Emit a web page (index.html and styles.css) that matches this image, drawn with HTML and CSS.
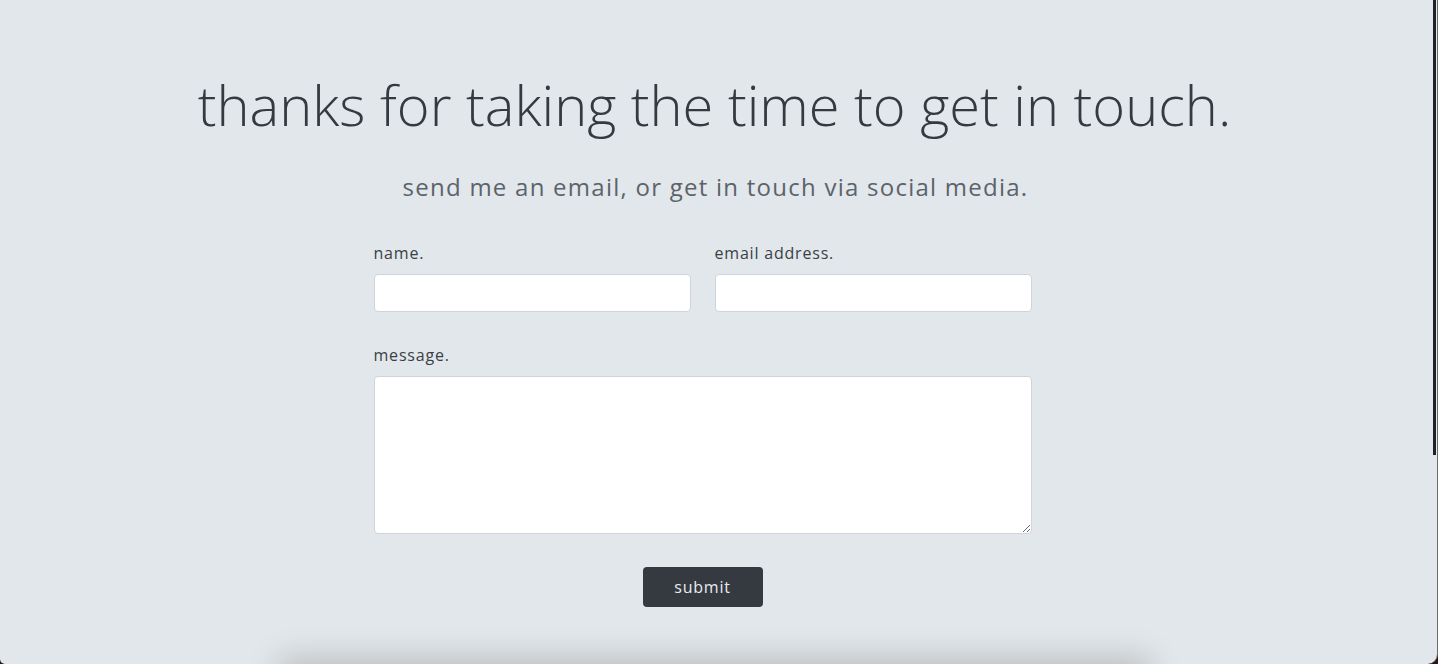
FILE: index.html
```html
<!DOCTYPE html>
<html lang="en">
<head>
<meta charset="utf-8">
<title>contact</title>
<link rel="stylesheet" href="styles.css">
</head>
<body>
<div class="window">
  <main class="page">
    <h1 class="title">thanks for taking the time to get in touch.</h1>
    <p class="lead">send me an email, or get in touch via social media.</p>
    <form class="contact">
      <div class="row">
        <div class="field">
          <label class="label" for="name">name.</label>
          <input class="control" id="name" type="text">
        </div>
        <div class="field">
          <label class="label" for="email">email address.</label>
          <input class="control" id="email" type="email">
        </div>
      </div>
      <div class="field message">
        <label class="label" for="msg">message.</label>
        <textarea class="control area" id="msg"></textarea>
      </div>
      <div class="actions">
        <button class="submit" type="button">submit</button>
      </div>
    </form>
    <div class="next-card"></div>
  </main>
  <div class="scroll-thumb"></div>
</div>
</body>
</html>
```

FILE: styles.css
```css
* { box-sizing: border-box; }
html, body { margin: 0; padding: 0; }
body {
  background: #2a1414;
  font-family: "Open Sans", "Noto Sans", sans-serif;
  color: #343a40;
}
.window {
  position: relative;
  width: 1438px;
  height: 664px;
  background: #e2e7eb;
  border-right: 1px solid #6a6a6a;
  border-radius: 0 0 10px 5px;
  overflow: hidden;
}
.page {
  display: flex;
  flex-direction: column;
  align-items: center;
  padding-top: 71px;
}
.title {
  margin: 0 0 0 -8px;
  font-size: 56px;
  font-weight: 300;
  line-height: 67px;
  color: #343a40;
}
.lead {
  margin: 34px 0 0 -6px;
  font-size: 24px;
  line-height: 29px;
  letter-spacing: 1.25px;
  color: #5c636a;
}
.contact {
  width: 658px;
  margin: 40px 32px 0 0;
}
.row {
  display: flex;
  gap: 24px;
}
.row .field { flex: 1; }
.label {
  display: block;
  font-size: 16px;
  line-height: 24px;
  letter-spacing: 0.8px;
  margin-bottom: 9px;
  color: #3a3f44;
}
.control {
  display: block;
  width: 100%;
  height: 38px;
  background: #fff;
  border: 1px solid #ced4da;
  border-radius: 4px;
  font: inherit;
}
.message { margin-top: 31px; }
.area {
  height: 158px;
  resize: vertical;
}
.actions {
  display: flex;
  justify-content: center;
  margin-top: 33px;
}
.submit {
  width: 120px;
  height: 40px;
  background: #343a40;
  color: #e9ecef;
  border: none;
  border-radius: 4px;
  font-family: inherit;
  font-size: 16px;
  letter-spacing: 0.8px;
}
.next-card {
  width: 860px;
  height: 200px;
  margin-top: 57px;
  margin-right: 8px;
  background: #e2e7eb;
  box-shadow: 0 0 30px 6px rgba(0, 0, 0, 0.18);
}
.scroll-thumb {
  position: absolute;
  top: 0;
  right: 1px;
  width: 3px;
  height: 455px;
  background: #1f2226;
}
```
